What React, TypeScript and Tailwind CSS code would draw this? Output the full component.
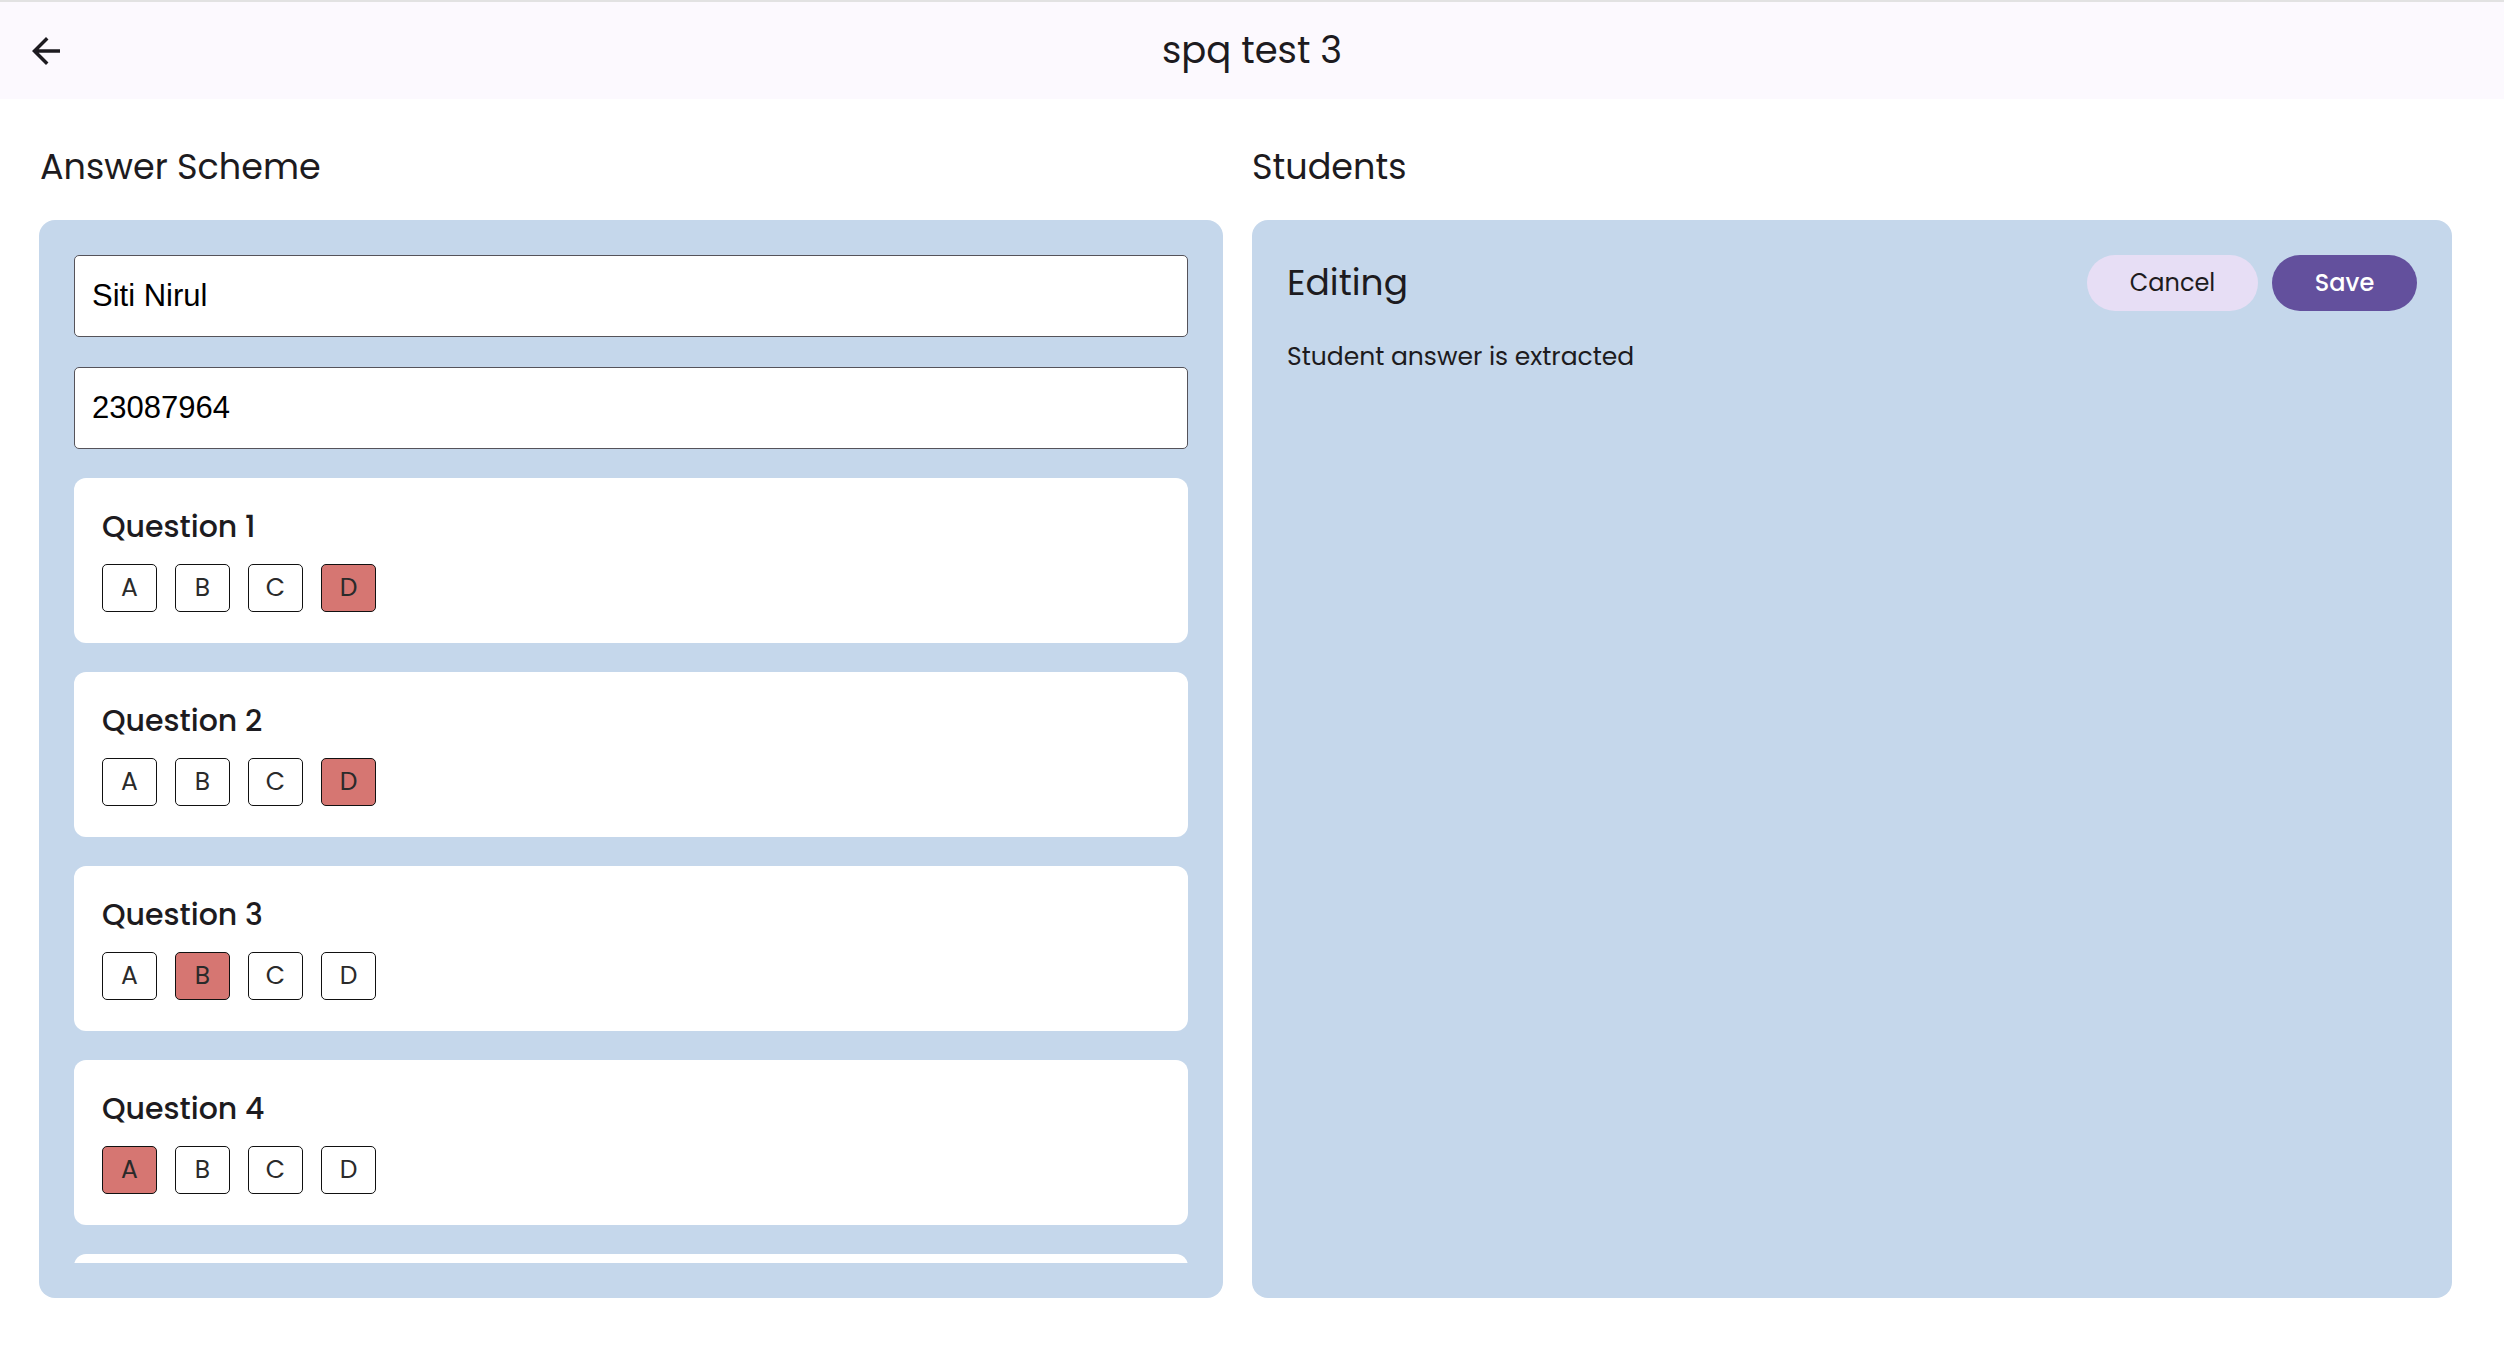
import React from "react";

const FONT = { fontFamily: '"Poppins", "Inter", "Noto Sans", sans-serif' };

const questions: { n: number; ans: string }[] = [
  { n: 1, ans: "D" },
  { n: 2, ans: "D" },
  { n: 3, ans: "B" },
  { n: 4, ans: "A" },
];

function BackArrow() {
  return (
    <svg width="42" height="42" viewBox="0 0 24 24" fill="#1d1b20">
      <path d="M20 11H7.83l5.59-5.59L12 4l-8 8 8 8 1.41-1.41L7.83 13H20v-2z" />
    </svg>
  );
}

function QuestionCard({ n, ans }: { n: number; ans: string }) {
  return (
    <div className="shrink-0 h-[165px] bg-white rounded-[12px] px-[28px] pt-[27px] flex flex-col">
      <div className="text-[30px] leading-[44px] font-medium text-[#1d1b20]">Question {n}</div>
      <div className="flex gap-[18px] mt-[15px]">
        {["A", "B", "C", "D"].map((l) => (
          <div
            key={l}
            className={
              "w-[55px] h-[48px] rounded-[5px] border-[1.5px] border-[#111] flex items-center justify-center text-[25px] text-[#2a2a2a] " +
              (l === ans ? "bg-[#d67672]" : "bg-white")
            }
          >
            {l}
          </div>
        ))}
      </div>
    </div>
  );
}

export default function App() {
  return (
    <div className="w-full h-[1356px] bg-white flex flex-col text-[#1d1b20]" style={FONT}>
      <header className="h-[99px] shrink-0 border-t-2 border-[#e2e2e2] bg-[#fcf9fe] grid grid-cols-[1fr_auto_1fr] items-center">
        <div className="pl-[25px] flex items-center">
          <BackArrow />
        </div>
        <div className="text-[37px] leading-none text-[#1d1b20]">spq test 3</div>
        <div />
      </header>

      <main className="flex gap-[29px] pl-[39px]">
        <section className="w-[1184px] flex flex-col">
          <h2 className="h-[121px] pt-[16px] flex items-center text-[35px] text-[#1d1b20] pl-[1px]">Answer Scheme</h2>
          <div className="h-[1078px] bg-[#c5d7eb] rounded-[16px] p-[35px]">
            <div className="h-full overflow-hidden flex flex-col gap-[30px]">
              <div className="shrink-0 h-[82px] bg-white border border-[#55535a] rounded-[5px] px-[17px] flex items-center text-[31px] text-black" style={{ fontFamily: '"Liberation Sans", Arial, sans-serif' }}>
                Siti Nirul
              </div>
              <div className="shrink-0 h-[82px] bg-white border border-[#55535a] rounded-[5px] px-[17px] flex items-center text-[31px] text-black" style={{ fontFamily: '"Liberation Sans", Arial, sans-serif' }}>
                23087964
              </div>
              <div className="flex flex-col gap-[29px] -mt-[1px]">
                {questions.map((q) => (
                  <QuestionCard key={q.n} n={q.n} ans={q.ans} />
                ))}
                <div className="shrink-0 h-[165px] bg-white rounded-[12px]" />
              </div>
            </div>
          </div>
        </section>

        <section className="w-[1200px] flex flex-col">
          <h2 className="h-[121px] pt-[16px] flex items-center text-[35px] text-[#1d1b20]">Students</h2>
          <div className="h-[1078px] bg-[#c5d7eb] rounded-[16px] p-[35px] flex flex-col">
            <div className="flex items-center justify-between h-[56px]">
              <div className="text-[36px] text-[#1d1b20]">Editing</div>
              <div className="flex gap-[14px]">
                <button className="w-[171px] h-[56px] rounded-full bg-[#e7def5] text-[24px] text-[#1d1b20]">Cancel</button>
                <button className="w-[145px] h-[56px] rounded-full bg-[#63509d] text-[24px] text-white font-medium">Save</button>
              </div>
            </div>
            <div className="mt-[27px] text-[25px] text-[#1d1b20]">Student answer is extracted</div>
          </div>
        </section>
      </main>
    </div>
  );
}
